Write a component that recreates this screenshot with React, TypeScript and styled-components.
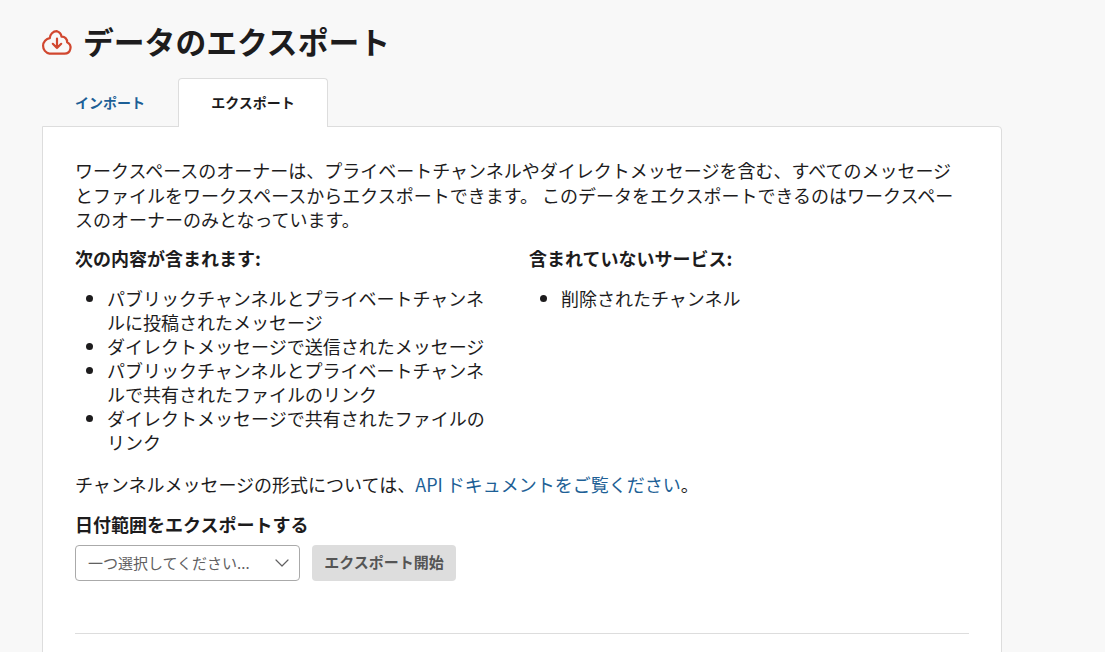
import { createGlobalStyle, styled } from "styled-components";

const GlobalStyle = createGlobalStyle`
  html, body {
    margin: 0;
    padding: 0;
    height: 100%;
    overflow: hidden;
    background: #f8f8f8;
  }
  body {
    font-family: "Noto Sans CJK JP", "Liberation Sans", sans-serif;
    color: #1d1c1d;
  }
`;

const Page = styled.div`
  width: 960px;
  margin-left: 42px;
`;

const Header = styled.div`
  display: flex;
  align-items: center;
  height: 78px;
  gap: 10px;
`;

const Title = styled.h1`
  margin: 0;
  font-size: 30.8px;
  line-height: 40px;
  font-weight: 700;
  color: #1d1c1d;
  padding-top: 3px;
`;

const HeaderIcon = styled.svg`
  flex: none;
  margin: 8px 0 0 -1px;
`;

const Tabs = styled.div`
  display: flex;
  height: 49px;
  margin-bottom: -1px;
  position: relative;
`;

const Tab = styled.a<{ $active?: boolean }>`
  display: flex;
  align-items: center;
  justify-content: center;
  box-sizing: border-box;
  width: ${(p) => (p.$active ? "150px" : "136px")};
  padding-bottom: 3px;
  font-size: 14px;
  font-weight: 700;
  color: ${(p) => (p.$active ? "#1d1c1d" : "#1d5f96")};
  background: ${(p) => (p.$active ? "#fff" : "transparent")};
  border: 1px solid ${(p) => (p.$active ? "#dddddd" : "transparent")};
  border-bottom: 0;
  border-radius: 4px 4px 0 0;
`;

const Card = styled.div`
  box-sizing: border-box;
  background: #fff;
  border: 1px solid #dddddd;
  border-radius: 0 4px 0 0;
  padding: 31px 32px 0;
  height: 560px;
`;

const Intro = styled.p`
  margin: 0 0 14px;
  font-size: 18px;
  line-height: 24.5px;
`;

const Columns = styled.div`
  display: grid;
  grid-template-columns: 412px 412px;
  column-gap: 42px;
`;

const ColumnTitle = styled.div`
  font-size: 18px;
  line-height: 24px;
  font-weight: 700;
`;

const List = styled.ul`
  margin: 16px 0 18px;
  padding: 0 0 0 32px;
  font-size: 18px;
  line-height: 24px;
`;

const Paragraph = styled.p`
  margin: 0 0 16px;
  font-size: 18px;
  line-height: 24px;
`;

const DocLink = styled.a`
  color: #1d5f96;
`;

const RangeLabel = styled.div`
  font-size: 18px;
  line-height: 24px;
  font-weight: 700;
  margin-bottom: 9px;
`;

const Controls = styled.div`
  display: flex;
  gap: 12px;
  height: 36px;
`;

const Select = styled.div`
  box-sizing: border-box;
  width: 225px;
  display: flex;
  align-items: center;
  justify-content: space-between;
  padding: 0 9px 0 12px;
  border: 1px solid #aaaaaa;
  border-radius: 4px;
  font-size: 15px;
  color: #616061;
`;

const StartButton = styled.div`
  box-sizing: border-box;
  width: 144px;
  display: flex;
  align-items: center;
  justify-content: center;
  padding-bottom: 2px;
  border-radius: 4px;
  background: #dddddd;
  font-size: 15px;
  font-weight: 700;
  color: #555555;
`;

const Divider = styled.hr`
  margin: 52px 0 0;
  border: 0;
  border-top: 1px solid #dddddd;
`;

const CloudIcon = () => (
  <HeaderIcon width="32" height="26" viewBox="0 0 32 26" fill="none" stroke="#d1472f" strokeWidth="2.2" strokeLinecap="round" strokeLinejoin="round">
    <path d="M8.5 23.6h15a6 6 0 0 0 2.6-11.4 5.2 5.2 0 0 0-5.6-5.6A6.6 6.6 0 0 0 16 1.2a7 7 0 0 0-7.2 7 7.8 7.8 0 0 0-.3 15.4z" />
    <path d="M16 8.5v9.5M11.8 13.8l4.2 4.2 4.2-4.2" />
  </HeaderIcon>
);

const Chevron = () => (
  <svg width="16" height="16" viewBox="0 0 16 16" fill="none" stroke="#616061" strokeWidth="1.2" strokeLinecap="round" strokeLinejoin="round">
    <path d="M2 5l6 6 6-6" />
  </svg>
);

const App = () => {
  return (
    <Page>
      <GlobalStyle />
      <Header>
        <CloudIcon />
        <Title>データのエクスポート</Title>
      </Header>
      <Tabs>
        <Tab>インポート</Tab>
        <Tab $active>エクスポート</Tab>
      </Tabs>
      <Card>
        <Intro>
          ワークスペースのオーナーは、プライベートチャンネルやダイレクトメッセージを含む、すべてのメッセージとファイルをワークスペースからエクスポートできます。 このデータをエクスポートできるのはワークスペースのオーナーのみとなっています。
        </Intro>
        <Columns>
          <div>
            <ColumnTitle>次の内容が含まれます:</ColumnTitle>
            <List>
              <li>パブリックチャンネルとプライベートチャンネルに投稿されたメッセージ</li>
              <li>ダイレクトメッセージで送信されたメッセージ</li>
              <li>パブリックチャンネルとプライベートチャンネルで共有されたファイルのリンク</li>
              <li>ダイレクトメッセージで共有されたファイルのリンク</li>
            </List>
          </div>
          <div>
            <ColumnTitle>含まれていないサービス:</ColumnTitle>
            <List>
              <li>削除されたチャンネル</li>
            </List>
          </div>
        </Columns>
        <Paragraph>
          チャンネルメッセージの形式については、<DocLink>API ドキュメントをご覧ください</DocLink>。
        </Paragraph>
        <RangeLabel>日付範囲をエクスポートする</RangeLabel>
        <Controls>
          <Select>
            一つ選択してください...
            <Chevron />
          </Select>
          <StartButton>エクスポート開始</StartButton>
        </Controls>
        <Divider />
      </Card>
    </Page>
  );
};

export default App;
